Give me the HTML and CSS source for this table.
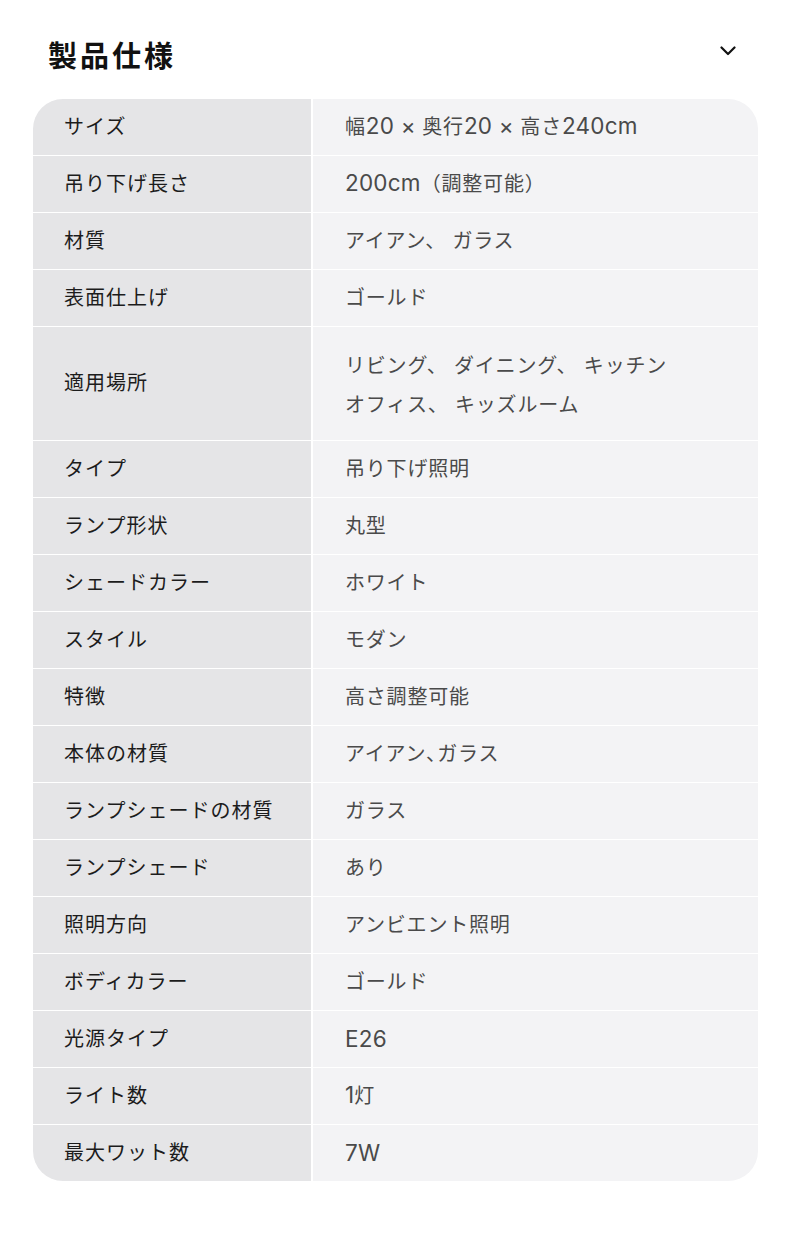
FILE: index.html
```html
<!DOCTYPE html>
<html lang="ja">
<head>
<meta charset="utf-8">
<link rel="stylesheet" href="styles.css">
</head>
<body>
<div class="page">
  <div class="header">
    <h2 class="title">製品仕様</h2>
    <svg class="chevron" width="16" height="10" viewBox="0 0 16 10"><path d="M1.5 1.5 L8 8 L14.5 1.5" fill="none" stroke="#111" stroke-width="2.2" stroke-linecap="round" stroke-linejoin="round"/></svg>
  </div>
  <div class="spec">
    <div class="k">サイズ</div><div class="v"><span>幅<span class="lat">20 × </span>奥行<span class="lat">20 × </span>高さ<span class="lat">240cm</span></span></div>
    <div class="k">吊り下げ長さ</div><div class="v"><span><span class="lat">200cm</span>（調整可能）</span></div>
    <div class="k">材質</div><div class="v">アイアン、 ガラス</div>
    <div class="k">表面仕上げ</div><div class="v">ゴールド</div>
    <div class="k tall">適用場所</div><div class="v tall"><span>リビング、 ダイニング、 キッチン<br>オフィス、 キッズルーム</span></div>
    <div class="k">タイプ</div><div class="v">吊り下げ照明</div>
    <div class="k">ランプ形状</div><div class="v">丸型</div>
    <div class="k">シェードカラー</div><div class="v">ホワイト</div>
    <div class="k">スタイル</div><div class="v">モダン</div>
    <div class="k">特徴</div><div class="v">高さ調整可能</div>
    <div class="k">本体の材質</div><div class="v">アイアン､ガラス</div>
    <div class="k">ランプシェードの材質</div><div class="v">ガラス</div>
    <div class="k">ランプシェード</div><div class="v">あり</div>
    <div class="k">照明方向</div><div class="v">アンビエント照明</div>
    <div class="k">ボディカラー</div><div class="v">ゴールド</div>
    <div class="k">光源タイプ</div><div class="v"><span class="lat">E26</span></div>
    <div class="k">ライト数</div><div class="v"><span><span class="lat">1</span>灯</span></div>
    <div class="k">最大ワット数</div><div class="v"><span class="lat">7W</span></div>
  </div>
</div>
</body>
</html>
```
FILE: styles.css
```css
html, body {
  margin: 0;
  padding: 0;
  background: #ffffff;
}
body {
  font-family: Inter, "Noto Sans CJK JP", sans-serif;
}
.page {
  width: 790px;
}
.header {
  display: flex;
  align-items: center;
  justify-content: space-between;
  padding: 34px 54px 0 48px;
  height: 40px;
}
.title {
  margin: 0;
  font-family: "Noto Sans CJK JP", sans-serif;
  font-size: 29px;
  font-weight: 700;
  letter-spacing: 3px;
  color: #111;
  line-height: 40px;
}
.chevron {
  display: block;
  margin-top: -6px;
}
.spec {
  margin: 25px 32px 0 33px;
  display: grid;
  grid-template-columns: 278px 1fr;
  column-gap: 2px;
  row-gap: 1px;
  background: #ffffff;
  border-radius: 30px;
  overflow: hidden;
}
.k, .v {
  min-height: 56px;
  display: flex;
  align-items: center;
  line-height: 39px;
}
.k {
  background: #e5e5e7;
  color: #1c1c1c;
  padding-left: 31px;
  font-size: 20px;
  letter-spacing: 1px;
}
.v {
  background: #f3f3f5;
  color: #4a4a4a;
  padding-left: 32px;
  font-size: 20px;
  letter-spacing: 0.8px;
}
.lat {
  font-size: 22.5px;
  letter-spacing: 0.2px;
  line-height: 1;
}
.v.tall {
  padding-top: 4px;
  box-sizing: border-box;
}
.tall {
  min-height: 113px;
}
```
